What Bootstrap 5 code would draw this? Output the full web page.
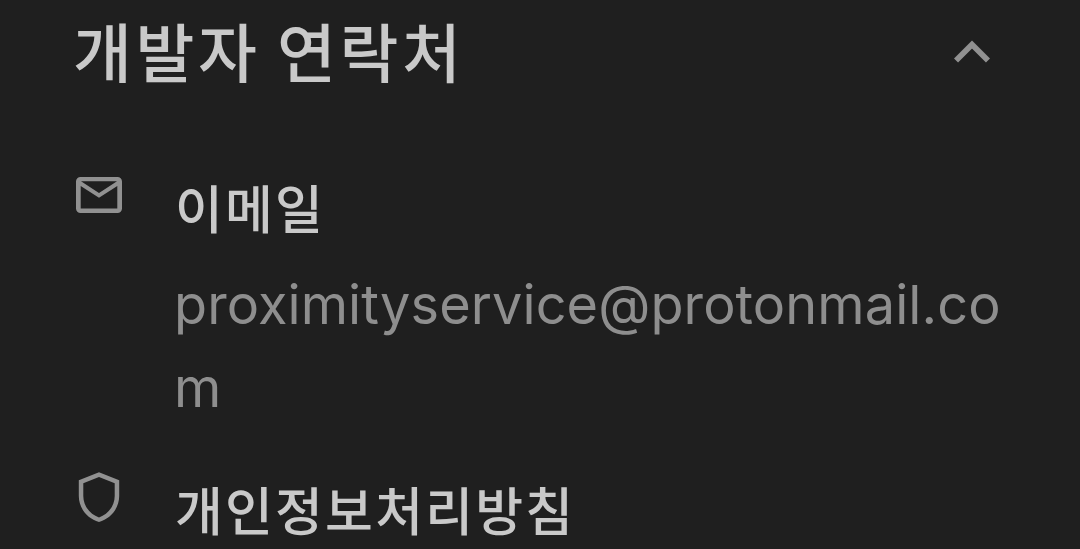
<!DOCTYPE html>
<html lang="ko">
  <head>
    <meta charset="UTF-8">
    <meta name="viewport" content="width=device-width, initial-scale=1.0">
    <title>개발자 연락처</title>
    <link href="https://cdn.jsdelivr.net/npm/bootstrap@5.3.0/dist/css/bootstrap.min.css" rel="stylesheet">
    <style>
      body {
        background: #1f1f1f;
        color: #c9c9c9;
        font-family: "Noto Sans CJK KR", sans-serif;
      }

      .contact-panel {
        height: 549px;
        padding: 0 80px 0 73px;
      }

      .contact-header {
        height: 98px;
      }

      .contact-title {
        font-size: 64px;
        line-height: 98px;
        font-weight: 500;
        letter-spacing: 3.6px;
        word-spacing: -5px;
      }

      .chevron {
        margin: 4px 10px 0 0;
      }

      .contact-row {
        gap: 51px;
        padding-left: 2px;
      }

      .email-row {
        margin-top: 67px;
      }

      .email-row svg {
        margin-top: 12px;
      }

      .contact-label {
        font-size: 52px;
        line-height: 84px;
        font-weight: 500;
        letter-spacing: 2.2px;
        padding-left: 1px;
      }

      .contact-value {
        font-family: "Inter", sans-serif;
        font-size: 54px;
        line-height: 83px;
        letter-spacing: 0.1px;
        color: #8e8e8e;
        margin-top: 14px;
      }

      .policy-row {
        margin-top: 38px;
      }

      .policy-row svg {
        margin-top: 5px;
      }
    </style>
  </head>
  <body>
    <main class="contact-panel overflow-hidden">
      <header class="contact-header d-flex justify-content-between align-items-center">
        <h1 class="contact-title m-0 text-nowrap">개발자 연락처</h1>
        <svg class="chevron" width="36" height="23" viewBox="0 0 36 23" fill="none" stroke="#919191" stroke-width="5.8"><path d="M2 20.5 18 4.5l16 16"/></svg>
      </header>
      <section class="contact-row email-row d-flex">
        <svg class="flex-shrink-0" width="48" height="36" viewBox="0 0 48 36" fill="#919191" fill-rule="evenodd"><path d="M5.5 0h37A4.5 4.5 0 0 1 47 4.500v27A4.500 4.500 0 0 1 42.500 36h-37A4.500 4.500 0 0 1 1 31.500v-27A4.500 4.500 0 0 1 5.500 0ZM5.700 9v22.500h36.600V9L24 20.700ZM24 16 42 4.300H6Z"/></svg>
        <div>
          <h2 class="contact-label m-0">이메일</h2>
          <div class="contact-value">proximityservice@protonmail.co<br>m</div>
        </div>
      </section>
      <section class="contact-row policy-row d-flex">
        <svg class="flex-shrink-0" width="48" height="51" viewBox="0 0 48 51" fill="#919191" fill-rule="evenodd"><path d="M24 .3 44.200 8.300V24c0 12-8.200 22.500-20.200 26C12 46.500 3.800 36 3.800 24V8.300ZM24 5 8.300 11.300V24c0 9.700 6.500 18.300 15.700 21.400C33.200 42.300 39.700 33.700 39.700 24V11.300Z"/></svg>
        <h2 class="contact-label m-0">개인정보처리방침</h2>
      </section>
    </main>
    <script src="https://cdn.jsdelivr.net/npm/bootstrap@5.3.0/dist/js/bootstrap.bundle.min.js"></script>
  </body>
</html>
